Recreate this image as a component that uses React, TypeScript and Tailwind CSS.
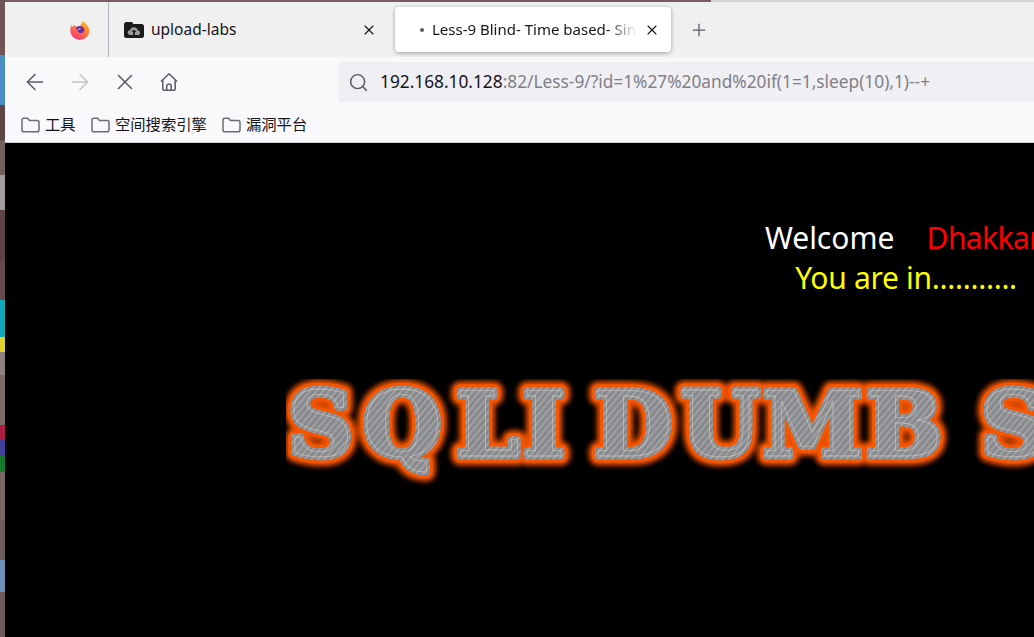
import { ArrowLeft, ArrowRight, Plus, Search, X } from 'lucide-react'

const FONT = "font-['Noto_Sans','Noto_Sans_CJK_SC',sans-serif]"

// bits of desktop wallpaper that show to the left of the browser window
const wallpaper = [
  'h-[55px] bg-[#6f5558]',
  'h-[50px] bg-[#4a8cc4]',
  'h-[35px] bg-[#5d4548]',
  'h-[35px] bg-[#75605f]',
  'h-[35px] bg-[#a29c9e]',
  'h-[50px] bg-[#5e4247]',
  'h-[40px] bg-[#67484e]',
  'h-[37px] bg-[#12a8b8]',
  'h-[15px] bg-[#e0d030]',
  'h-[23px] bg-[#8b8380]',
  'h-[50px] bg-[#7b6a68]',
  'h-[15px] bg-[#b01c40]',
  'h-[15px] bg-[#40409a]',
  'h-[17px] bg-[#167a2c]',
  'h-[48px] bg-[#7a6664]',
  'h-[40px] bg-[#6f5c5c]',
  'h-[32px] bg-[#6f8fb8]',
  'h-[45px] bg-[#6e5a5a]',
]

function FirefoxLogo() {
  return (
    <svg width="20" height="20" viewBox="0 0 20 20">
      <defs>
        <linearGradient id="ffBody" x1="0.8" y1="0" x2="0.2" y2="1">
          <stop offset="0" stopColor="#ffc01e" />
          <stop offset="0.5" stopColor="#ff7139" />
          <stop offset="1" stopColor="#f5338a" />
        </linearGradient>
      </defs>
      <path d="M13 0.5c.6 2 2.6 2.6 4 4.6 1.6 2.3 2.4 4 2.4 5.4a9.6 9.6 0 1 1-19.2-.2c0-2 .6-4 1.6-5.3l.4 2.2c.6-1 1.6-1.8 3-2.2-.3.7-.3 1.2 0 1.6 1.6.4 3 .2 4.2 1.2.2-2.5 2.6-4 3.6-7.3z" fill="url(#ffBody)" />
      <path d="M11.5 6.5c-2-1-4.8-.3-5.8 1.7l1.6 1c.2 2.2 1.4 3.8 3.6 3.8s3.6-1.6 3.4-3.6c-.2-1.4-1.2-2.4-2.8-2.9z" fill="#5b2fb8" />
      <path d="M7.3 9.2c.8-.8 2.4-1.2 3.6-.7-.2 1.4-1.4 2.2-3.6.7z" fill="#ff9a3c" />
    </svg>
  )
}

function UploadFolder() {
  return (
    <svg width="20" height="17" viewBox="0 0 20 17">
      <path d="M2.500 1h5.500l1.500 2H17.500a2.500 2.500 0 0 1 2.500 2.500V14.500a2.500 2.500 0 0 1-2.500 2.500h-15A2.500 2.500 0 0 1 0 14.500V3.500A2.500 2.500 0 0 1 2.500 1z" fill="#1b1b1b" />
      <path d="M6 14a2.400 2.400 0 0 1 0-4.800 4 4 0 0 1 7.800.4A2.200 2.200 0 0 1 14 14z" fill="#9a9a9a" />
      <path d="M10 8.500l2.400 2.600h-1.500V14H9.100V11.100H7.600z" fill="#1b1b1b" />
    </svg>
  )
}

function HomeIcon() {
  return (
    <svg width="20" height="20" viewBox="0 0 20 20" fill="none" stroke="#5b5b66" strokeWidth="1.500" strokeLinejoin="round">
      <path d="M2 9.500 10 1.800l8 7.700M3.800 8v9a1.200 1.200 0 0 0 1.200 1.200h10a1.200 1.200 0 0 0 1.200-1.200V8" />
      <path d="M7.800 18v-4.300a1.500 1.500 0 0 1 1.500-1.500h1.400a1.500 1.500 0 0 1 1.500 1.500V18" />
    </svg>
  )
}

function BookmarkFolder() {
  return (
    <svg width="19" height="16" viewBox="0 0 19 16" fill="none" stroke="#6b6b74" strokeWidth="1.500" strokeLinejoin="round" className="shrink-0">
      <path d="M1 3a1.800 1.800 0 0 1 1.800-1.800h3.700l2 2.300h7.700A1.800 1.800 0 0 1 18 5.300V13a1.800 1.800 0 0 1-1.800 1.800H2.800A1.800 1.800 0 0 1 1 13z" />
    </svg>
  )
}

function Bookmark({ label }: { label: string }) {
  return (
    <div className="flex items-center gap-[5px]">
      <BookmarkFolder />
      <span className="text-[15.3px] text-[#15141a] whitespace-nowrap">{label}</span>
    </div>
  )
}

// the banner is a picture in the page, drawn here from real text in layers
function Banner() {
  return (
    <svg width="1240" height="110" viewBox="0 0 1240 110" className="block">
      <defs>
        <pattern id="brushed" width="5" height="5" patternUnits="userSpaceOnUse" patternTransform="rotate(-50)">
          <rect width="5" height="5" fill="#8f9094" />
          <rect width="5" height="1.500" fill="#a3a4a7" />
          <rect y="3.500" width="5" height="1" fill="#7c7d81" />
        </pattern>
        <filter id="glow" x="-5%" y="-30%" width="110%" height="160%">
          <feGaussianBlur stdDeviation="2.500" />
        </filter>
        <text
          id="bannerText"
          y="77"
          x="2 77 170 237 300 308 395 477 580 680 695 767 841 916 961 1036"
          fontFamily="'DejaVu Serif',serif"
          fontWeight="700"
          fontSize="90"
        >
          SQLI DUMB SERIES
        </text>
      </defs>
      <use href="#bannerText" fill="#f45400" stroke="#e85000" strokeWidth="19" strokeLinejoin="round" filter="url(#glow)" />
      <use href="#bannerText" fill="#ef5200" stroke="#f65600" strokeWidth="13" strokeLinejoin="round" />
      <use href="#bannerText" fill="url(#brushed)" stroke="url(#brushed)" strokeWidth="7" strokeLinejoin="round" />
      <use href="#bannerText" fill="none" stroke="#ece4da" strokeOpacity="0.5" strokeWidth="0.8" />
    </svg>
  )
}

export default function App() {
  return (
    <div className={`w-[1034px] h-[637px] flex overflow-hidden bg-black ${FONT}`}>
      {/* Desktop behind the window */}
      <div className="w-[5px] shrink-0 flex flex-col">
        {wallpaper.map((c, i) => (
          <div key={i} className={c} />
        ))}
      </div>

      <div className="flex-1 min-w-0 flex flex-col">
        <div className="h-[2px] shrink-0 flex">
          <div className="w-[706px] bg-[#7a5c60]" />
          <div className="flex-1 bg-[#d4d4d4]" />
        </div>

        {/* Tab strip */}
        <div className="h-[55px] shrink-0 bg-[#f0f0f0] flex items-center">
          <div className="w-[104px] h-full shrink-0 border-r border-[#b4b4b8] flex items-center pl-[65px]">
            <FirefoxLogo />
          </div>
          <div className="w-[286px] shrink-0 flex items-center pl-[15px] pr-[18px]">
            <UploadFolder />
            <span className="ml-[7px] flex-1 text-[15.5px] text-[#15141a]">upload-labs</span>
            <X size={16} strokeWidth={1.6} className="text-[#15141a]" />
          </div>
          <div className="w-[276px] h-[45px] shrink-0 bg-white rounded-[4px] shadow-[0_1px_4px_rgba(0,0,0,0.35)] flex items-center pl-[25px] pr-[11px]">
            <span className="w-[4px] h-[4px] rounded-full bg-[#5b5b66] shrink-0" />
            <span className="ml-[8px] flex-1 min-w-0 overflow-hidden whitespace-nowrap text-[15px] text-[#15141a] [mask-image:linear-gradient(to_right,black_82%,transparent_97%)]">
              Less-9 Blind- Time based- Single Quotes- String
            </span>
            <X size={16} strokeWidth={1.6} className="text-[#15141a] shrink-0" />
          </div>
          <Plus size={20} strokeWidth={1.5} className="ml-[18px] text-[#5b5b66]" />
        </div>

        {/* Toolbar */}
        <div className="h-[50px] shrink-0 bg-[#f9f9fb] flex items-center">
          <div className="w-[333px] shrink-0 flex items-center pl-[8px]">
            <div className="w-[44px] flex justify-center">
              <ArrowLeft size={26} strokeWidth={1.4} className="text-[#5b5b66]" />
            </div>
            <div className="w-[46px] flex justify-center">
              <ArrowRight size={26} strokeWidth={1.4} className="text-[#c4c4c9]" />
            </div>
            <div className="w-[44px] flex justify-center">
              <X size={26} strokeWidth={1.4} className="text-[#5b5b66]" />
            </div>
            <div className="w-[44px] flex justify-center">
              <HomeIcon />
            </div>
          </div>
          <div className="flex-1 min-w-0 h-[40px] bg-[#f0f0f4] rounded-l-[4px] flex items-center pl-[10px]">
            <Search size={21} strokeWidth={1.7} className="text-[#5b5b66] shrink-0" />
            <div className="ml-[11px] text-[17.3px] whitespace-nowrap">
              <span className="text-[#15141a]">192.168.10.128</span>
              <span className="text-[#7f7f87]">:82/Less-9/?id=1%27%20and%20if(1=1,sleep(10),1)--+</span>
            </div>
          </div>
        </div>

        {/* Bookmarks */}
        <div className="h-[35px] shrink-0 bg-[#f9f9fb] flex items-center pl-[16px] border-b border-[#cfcfd4] box-content">
          <div className="w-[70px]"><Bookmark label="工具" /></div>
          <div className="w-[131px]"><Bookmark label="空间搜索引擎" /></div>
          <Bookmark label="漏洞平台" />
        </div>

        {/* Page */}
        <div className="flex-1 min-h-0 overflow-hidden bg-black">
          <div className="w-[1802px] flex flex-col items-center pt-[75px] text-[30px] leading-[40px] font-['Noto_Sans',sans-serif]">
            <div className="text-white whitespace-pre">
              Welcome{'    '}<span className="ml-[1px] tracking-[-0.6px] text-[#ff0000]">Dhakkan</span>
            </div>
            <div className="text-[#ffff00] tracking-[-0.3px]">You are in...........</div>
            <div className="mt-[81px]">
              <Banner />
            </div>
          </div>
        </div>
      </div>
    </div>
  )
}
